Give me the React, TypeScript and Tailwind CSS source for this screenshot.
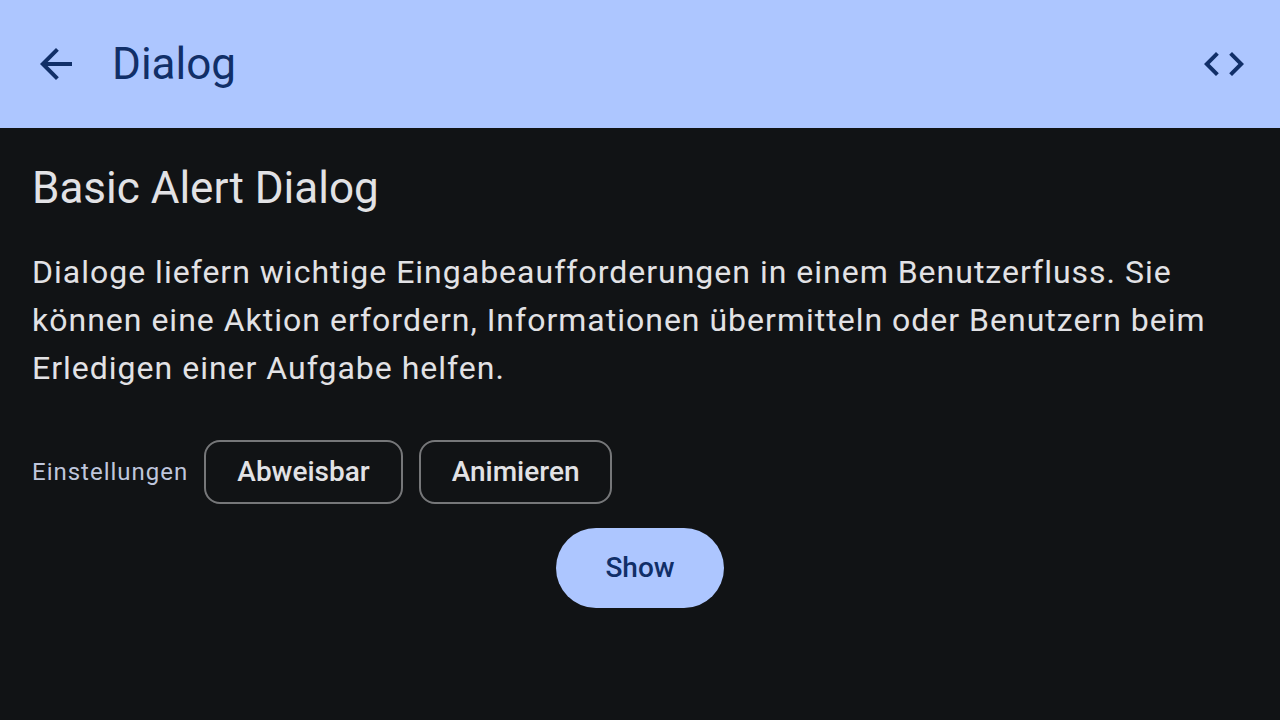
import { useState } from "react";

const chips = ["Abweisbar", "Animieren"];

export default function App() {
  const [selected, setSelected] = useState<string[]>([]);
  const toggle = (name: string) =>
    setSelected((s) => (s.includes(name) ? s.filter((n) => n !== name) : [...s, name]));

  return (
    <div className="flex min-h-screen flex-col bg-[#111315] font-['Roboto',sans-serif] text-[#e2e2e5]">
      <header className="flex h-32 items-center bg-[#adc6ff] px-8 text-[#112f68]">
        <button type="button" aria-label="Zurück" className="flex size-12 items-center justify-center">
          <svg viewBox="0 0 24 24" className="size-12" fill="currentColor" aria-hidden="true">
            <path d="M20 11H7.83l5.59-5.59L12 4l-8 8 8 8 1.41-1.41L7.83 13H20v-2z" />
          </svg>
        </button>
        <h1 className="ml-8 flex-1 text-[44px] leading-14">Dialog</h1>
        <button type="button" aria-label="Quellcode" className="flex size-12 items-center justify-center">
          <svg viewBox="0 0 24 24" className="size-12" fill="currentColor" aria-hidden="true">
            <path d="M9.4 16.6 4.8 12l4.6-4.6L8 6l-6 6 6 6 1.4-1.4zm5.2 0 4.6-4.6-4.6-4.6L16 6l6 6-6 6-1.4-1.4z" />
          </svg>
        </button>
      </header>
      <main className="flex flex-col px-8 pt-8">
        <h2 className="text-[44px] leading-14">Basic Alert Dialog</h2>
        <p className="mt-8 text-[32px] leading-12 tracking-[1px]">
          Dialoge liefern wichtige Eingabeaufforderungen in einem Benutzerfluss. Sie können eine Aktion
          erfordern, Informationen übermitteln oder Benutzern beim Erledigen einer Aufgabe helfen.
        </p>
        <div className="mt-12 flex items-center gap-4">
          <span className="text-2xl tracking-[1px] text-[#bfc6dc]">Einstellungen</span>
          {chips.map((name) => (
            <button
              key={name}
              type="button"
              aria-pressed={selected.includes(name)}
              onClick={() => toggle(name)}
              className="flex h-16 items-center rounded-2xl border-2 border-[#767779] px-[31px] text-[28px] font-medium"
            >
              {name}
            </button>
          ))}
        </div>
        <button
          type="button"
          className="mt-6 flex h-20 items-center self-center rounded-full bg-[#adc6ff] px-[49px] text-[28px] font-medium text-[#112f68]"
        >
          Show
        </button>
      </main>
    </div>
  );
}
